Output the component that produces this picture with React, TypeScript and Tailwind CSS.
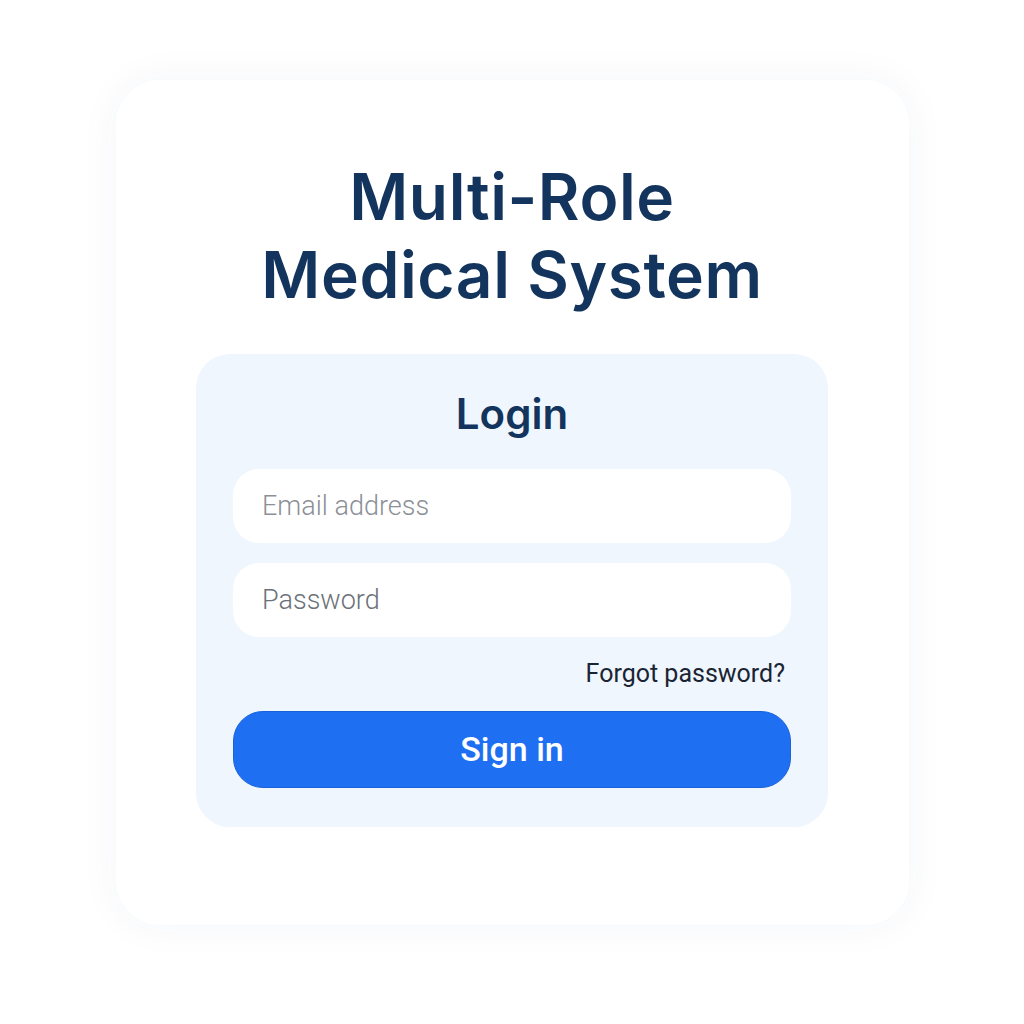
export default function App() {
  return (
    <div className="w-full min-h-[1024px] bg-white flex justify-center pt-[80px] font-['Inter',sans-serif]">
      <div className="w-[793px] h-[845px] bg-white rounded-[44px] shadow-[0_0_40px_rgba(30,60,120,0.05)] flex flex-col items-center pt-[78px]">
        {/* Title */}
        <h1 className="text-[64px] leading-[78px] font-semibold text-[#12345d] text-center tracking-[0.6px]">
          Multi-Role
          <br />
          Medical System
        </h1>

        {/* Login card */}
        <div className="mt-[40px] w-[632px] h-[473px] bg-[#eff6fe] rounded-[34px] px-[37px] pt-[34px] flex flex-col">
          <h2 className="text-center text-[42px] leading-[52px] font-semibold text-[#12345d]">
            Login
          </h2>

          <div className="mt-[29px] h-[74px] bg-white rounded-[26px] flex items-center px-[29px]">
            <span className="text-[27px] text-[#8b9097] font-['Roboto',sans-serif] font-light">
              Email address
            </span>
          </div>

          <div className="mt-[20px] h-[74px] bg-white rounded-[26px] flex items-center px-[29px]">
            <span className="text-[27px] text-[#6b7178] font-['Roboto',sans-serif] font-light">
              Password
            </span>
          </div>

          <div className="mt-[20px] flex justify-end pr-[6px]">
            <span className="text-[25px] leading-[34px] text-[#1b2433] font-['Roboto',sans-serif]">
              Forgot password?
            </span>
          </div>

          <button className="mt-[20px] h-[77px] w-full rounded-[30px] bg-[#1e6ff2] border border-[#1a62da] text-white text-[34px] font-['Roboto',sans-serif] font-medium">
            Sign in
          </button>
        </div>
      </div>
    </div>
  );
}
